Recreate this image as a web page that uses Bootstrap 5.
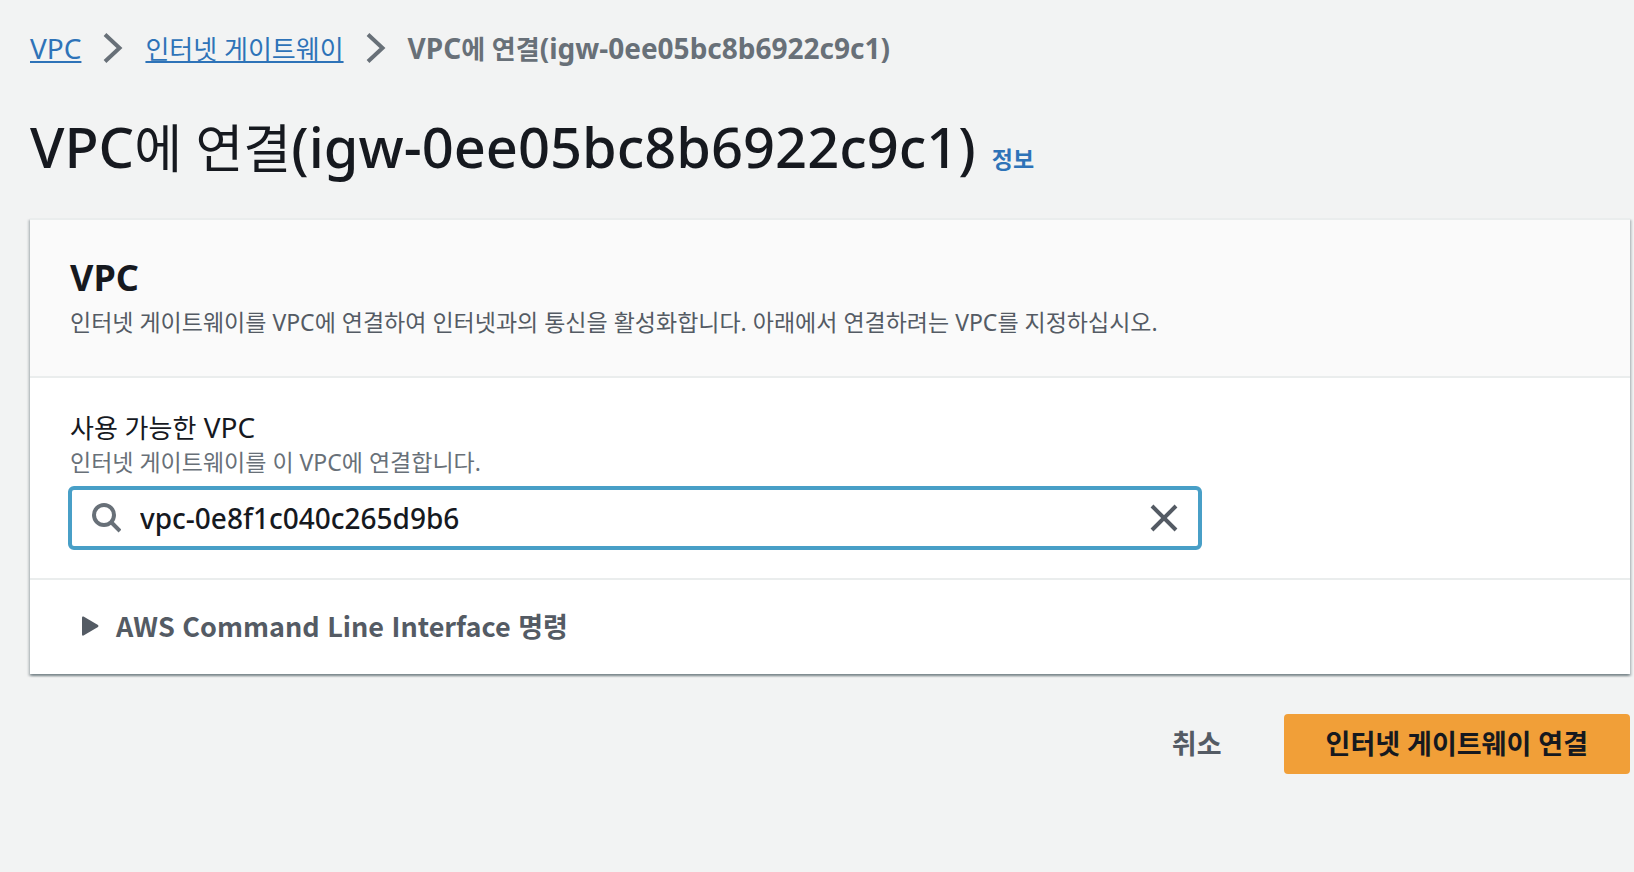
<!DOCTYPE html>
<html lang="ko">
<head>
<meta charset="utf-8">
<meta name="viewport" content="width=device-width, initial-scale=1">
<title>VPC에 연결</title>
<link href="https://cdn.jsdelivr.net/npm/bootstrap@5.3.0/dist/css/bootstrap.min.css" rel="stylesheet">
<style>
  body { background: #f2f3f3; color: #16191f; font-family: "Noto Sans", "Noto Sans CJK KR", sans-serif; font-size: 28px; line-height: 36px; }
  a { color: #2e73b8; }
  .ko { font-size: 26px; }
  .page { padding: 28px 4px 40px 30px; }
  .crumbs { gap: 22px; height: 40px; }
  .crumbs a { text-underline-offset: 2px; text-decoration-thickness: 2px; }
  .crumbs .active { color: #687078; font-weight: 700; }
  .crumbs svg { width: 20px; height: 30px; }
  .page-title { font-size: 56px; line-height: 72px; font-weight: 500; margin: 42px 0 23px; }
  .page-title .ko { font-size: 52px; font-weight: 400; }
  .info-link { font-size: 23px; font-weight: 700; text-decoration: none; margin-left: 16px; }
  .panel { background: #fff; border-top: 2px solid #eaeded; box-shadow: 0 2px 2px rgba(0,28,36,.3), 2px 2px 2px rgba(0,28,36,.15), -2px 2px 2px rgba(0,28,36,.15); }
  .panel-head { background: #fafafa; border-bottom: 2px solid #eaeded; padding: 36px 40px; }
  .panel-head h2 { font-size: 36px; line-height: 44px; font-weight: 700; margin: 0 0 4px; }
  .desc, .hint { font-size: 23px; line-height: 36px; color: #545b64; }
  .hint { color: #687078; line-height: 34px; }
  .panel-body { padding: 32px 40px 28px; border-bottom: 2px solid #eaeded; }
  .panel-body label { line-height: 34px; }
  .field-row { --bs-gutter-x: 40px; }
  .search-box { border: 4px solid #489fc7; border-radius: 6px; background: #fff; height: 64px; padding: 0 19px; gap: 19px; margin: 7px -2px 0; }
  .search-box input { font-size: 28px; line-height: 36px; font-weight: 500; color: #16191f; }
  .search-box svg { width: 30px; height: 30px; }
  .cli-toggle { color: #545b64; font-family: "Noto Sans CJK KR", sans-serif; font-size: 27px; font-weight: 700; line-height: 36px; gap: 17px; padding: 28px 52px 30px; }
  .cli-toggle svg { width: 17px; height: 20px; }
  .actions { margin-top: 40px; }
  .actions .btn { --bs-btn-font-size: 27px; --bs-btn-font-weight: 700; --bs-btn-line-height: 36px; --bs-btn-border-width: 0; --bs-btn-border-radius: 4px; --bs-btn-padding-y: 12px; height: 60px; }
  .btn-cancel { --bs-btn-color: #545b64; --bs-btn-hover-color: #16191f; --bs-btn-padding-x: 62px; }
  .btn-attach { --bs-btn-color: #16191f; --bs-btn-bg: #f19f38; --bs-btn-hover-bg: #ec7211; --bs-btn-padding-x: 42px; }
</style>
</head>
<body>
<main class="page">
  <nav aria-label="breadcrumb">
    <ol class="list-unstyled crumbs d-flex align-items-center mb-0">
      <li><a href="#">VPC</a></li>
      <li class="d-flex" aria-hidden="true"><svg viewBox="0 0 20 30" fill="none" stroke="#687078" stroke-width="4"><path d="M2 1.500L16.500 15L2 28.500"/></svg></li>
      <li><a href="#" class="ko">인터넷 게이트웨이</a></li>
      <li class="d-flex" aria-hidden="true"><svg viewBox="0 0 20 30" fill="none" stroke="#687078" stroke-width="4"><path d="M2 1.500L16.500 15L2 28.500"/></svg></li>
      <li class="active" aria-current="page">VPC<span class="ko">에 연결</span>(igw-0ee05bc8b6922c9c1)</li>
    </ol>
  </nav>

  <h1 class="page-title">VPC<span class="ko">에 연결</span>(igw-0ee05bc8b6922c9c1)<a href="#" class="info-link">정보</a></h1>

  <section class="panel">
    <header class="panel-head">
      <h2>VPC</h2>
      <p class="desc mb-0">인터넷 게이트웨이를 VPC에 연결하여 인터넷과의 통신을 활성화합니다. 아래에서 연결하려는 VPC를 지정하십시오.</p>
    </header>
    <div class="panel-body">
      <div class="row field-row">
        <div class="col-9">
          <label for="vpc" class="d-block"><span class="ko">사용 가능한</span> VPC</label>
          <div id="vpc-hint" class="hint">인터넷 게이트웨이를 이 VPC에 연결합니다.</div>
          <div class="search-box d-flex align-items-center">
            <svg class="flex-shrink-0" viewBox="0 0 30 30" fill="none" stroke="#687078" stroke-width="4" aria-hidden="true"><circle cx="13" cy="12" r="10"/><path d="M20 19L29 28"/></svg>
            <input id="vpc" type="text" class="form-control border-0 shadow-none bg-transparent p-0" value="vpc-0e8f1c040c265d9b6" aria-describedby="vpc-hint">
            <button type="button" class="btn border-0 p-0 d-flex flex-shrink-0" aria-label="지우기"><svg viewBox="0 0 30 30" fill="none" stroke="#545b64" stroke-width="4"><path d="M3 3L27 27M27 3L3 27"/></svg></button>
          </div>
        </div>
      </div>
    </div>
    <button type="button" class="cli-toggle btn border-0 rounded-0 w-100 d-flex align-items-center text-start" aria-expanded="false">
      <svg viewBox="0 0 17 20" fill="#545b64" aria-hidden="true"><path d="M0 1.500Q0 0 1.500 .5L16 9Q17 10 16 11L1.500 19.500Q0 20 0 18.500Z"/></svg>
      <span>AWS Command Line Interface 명령</span>
    </button>
  </section>

  <div class="actions d-flex justify-content-end">
    <button type="button" class="btn btn-cancel">취소</button>
    <button type="button" class="btn btn-attach">인터넷 게이트웨이 연결</button>
  </div>
</main>
<script src="https://cdn.jsdelivr.net/npm/bootstrap@5.3.0/dist/js/bootstrap.bundle.min.js"></script>
</body>
</html>
